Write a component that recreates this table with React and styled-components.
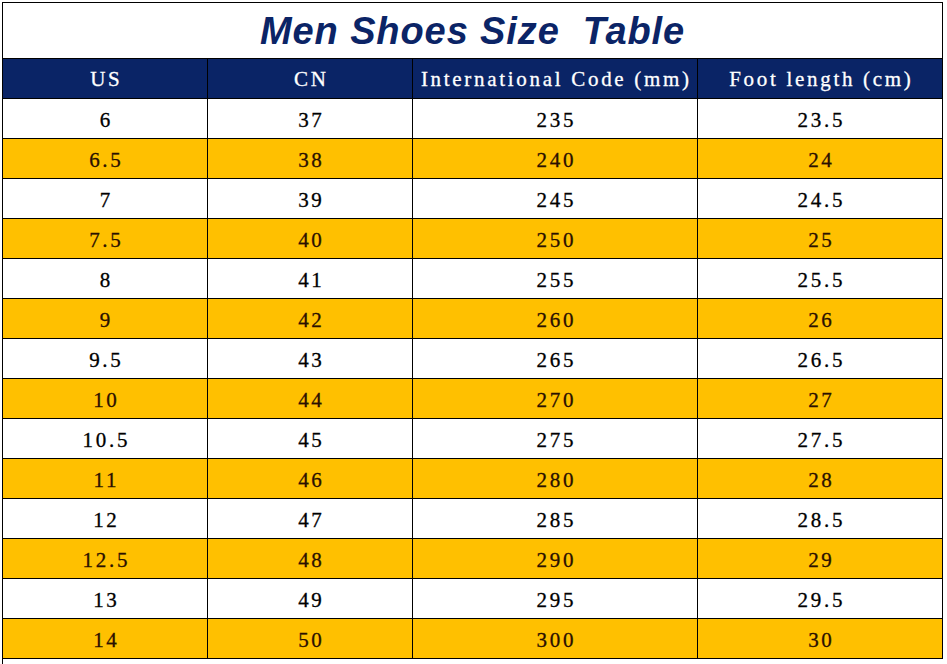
import React from 'react';
import styled, { createGlobalStyle } from 'styled-components';

const GlobalStyle = createGlobalStyle`
  html, body {
    margin: 0;
    padding: 0;
    background: #ffffff;
  }
`;

const Page = styled.div`
  width: 947px;
  height: 664px;
  overflow: hidden;
  padding: 2px 0 0 2px;
  box-sizing: border-box;
  background: #ffffff;
`;

const Sheet = styled.div`
  width: 941px;
  display: grid;
  grid-template-columns: 205px 205px 285px 245px;
  border-left: 1px solid #000;
  border-top: 1px solid #000;
  box-sizing: border-box;
`;

const TitleCell = styled.div`
  grid-column: 1 / -1;
  height: 56px;
  box-sizing: border-box;
  display: flex;
  align-items: center;
  justify-content: center;
  padding-top: 2px;
  border-right: 1px solid #000;
  border-bottom: 1px solid #000;
  font-family: "Liberation Sans", Arial, sans-serif;
  font-weight: 700;
  font-style: italic;
  font-size: 38px;
  letter-spacing: 0.9px;
  color: #0b2466;
  white-space: pre;
`;

const Cell = styled.div`
  height: 40px;
  display: flex;
  align-items: center;
  justify-content: center;
  padding: ${p => (p.$head ? '2px' : '3px')} 0 0 2.7px;
  box-sizing: border-box;
  border-right: 1px solid #000;
  border-bottom: 1px solid #000;
  background: ${p => (p.$head ? '#0a2466' : p.$gold ? '#ffc000' : '#ffffff')};
  color: ${p => (p.$head ? '#ffffff' : p.$gold ? '#2a1000' : '#000000')};
  font-family: "Liberation Serif", "Times New Roman", serif;
  font-size: 21px;
  letter-spacing: 2.7px;
  -webkit-text-stroke: 0.3px currentColor;
  white-space: pre;
`;

const Spacer = styled.div`
  grid-column: 1 / -1;
  height: 20px;
`;

const headers = ['US', 'CN', 'International Code (mm)', 'Foot length (cm)'];

const rows = [
  ['6', '37', '235', '23.5'],
  ['6.5', '38', '240', '24'],
  ['7', '39', '245', '24.5'],
  ['7.5', '40', '250', '25'],
  ['8', '41', '255', '25.5'],
  ['9', '42', '260', '26'],
  ['9.5', '43', '265', '26.5'],
  ['10', '44', '270', '27'],
  ['10.5', '45', '275', '27.5'],
  ['11', '46', '280', '28'],
  ['12', '47', '285', '28.5'],
  ['12.5', '48', '290', '29'],
  ['13', '49', '295', '29.5'],
  ['14', '50', '300', '30'],
];

export default function App() {
  return (
    <>
      <GlobalStyle />
      <Page>
        <Sheet>
          <TitleCell>Men Shoes Size  Table</TitleCell>
          {headers.map(h => (
            <Cell key={h} $head>{h}</Cell>
          ))}
          {rows.map((row, i) =>
            row.map((v, j) => (
              <Cell key={`${i}-${j}`} $gold={i % 2 === 1}>{v}</Cell>
            ))
          )}
          <Spacer />
        </Sheet>
      </Page>
    </>
  );
}
